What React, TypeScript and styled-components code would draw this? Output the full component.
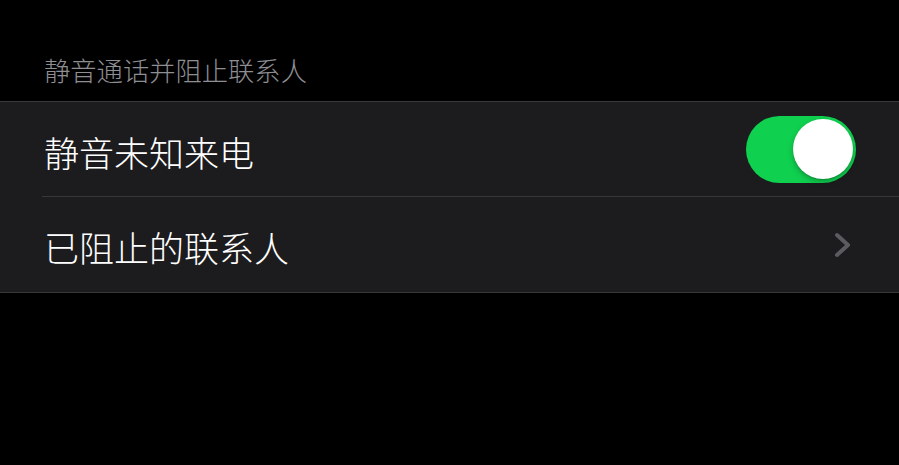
import { useState } from "react";
import styled, { createGlobalStyle } from "styled-components";

const GlobalStyle = createGlobalStyle`
  html, body {
    margin: 0;
    padding: 0;
    background: #000;
  }
  body {
    font-family: "Noto Sans CJK SC", "Noto Sans", sans-serif;
    -webkit-font-smoothing: antialiased;
  }
`;

const Page = styled.div`
  width: 899px;
  height: 465px;
  background: #000;
  overflow: hidden;
`;

const SectionHeader = styled.div`
  height: 101px;
  box-sizing: border-box;
  display: flex;
  align-items: flex-end;
  padding: 0 0 14px 44px;
  color: #8e8e93;
  font-size: 26.3px;
  font-weight: 300;
  line-height: 34px;
`;

const Group = styled.div`
  background: #1c1c1e;
  border-top: 1px solid #38383a;
  border-bottom: 1px solid #38383a;
`;

const Row = styled.div<{ $last?: boolean }>`
  position: relative;
  height: 95px;
  display: flex;
  align-items: center;
  justify-content: space-between;
  padding: 0 44px;
  box-sizing: border-box;

  &::after {
    content: "";
    display: ${(p) => (p.$last ? "none" : "block")};
    position: absolute;
    left: 42px;
    right: 0;
    bottom: 0;
    height: 1px;
    background: #38383a;
  }
`;

const Label = styled.span`
  color: #fff;
  font-size: 35px;
  font-weight: 300;
  line-height: 44px;
  margin-top: 4px;
`;

const SwitchTrack = styled.button<{ $on: boolean }>`
  position: relative;
  width: 110px;
  height: 67px;
  margin-right: -1px;
  border: none;
  border-radius: 34px;
  padding: 0;
  cursor: pointer;
  background: ${(p) => (p.$on ? "#0fd14f" : "#39393d")};
  transition: background 0.2s;
`;

const SwitchKnob = styled.span<{ $on: boolean }>`
  position: absolute;
  top: 3px;
  left: ${(p) => (p.$on ? "47px" : "4px")};
  width: 60px;
  height: 60px;
  border-radius: 50%;
  background: #fff;
  box-shadow: 0 3px 6px rgba(0, 0, 0, 0.25), 0 1px 1px rgba(0, 0, 0, 0.15);
  transition: left 0.2s;
`;

const Chevron = styled.svg`
  width: 18px;
  height: 26px;
  margin-right: 3px;
`;

export default function App() {
  const [silence, setSilence] = useState(true);

  return (
    <Page>
      <GlobalStyle />
      <SectionHeader>静音通话并阻止联系人</SectionHeader>
      <Group>
        <Row>
          <Label>静音未知来电</Label>
          <SwitchTrack $on={silence} onClick={() => setSilence(!silence)}>
            <SwitchKnob $on={silence} />
          </SwitchTrack>
        </Row>
        <Row $last>
          <Label>已阻止的联系人</Label>
          <Chevron viewBox="0 0 18 26">
            <path
              d="M3 3 L14 13 L3 23"
              fill="none"
              stroke="#5b5b60"
              strokeWidth="4"
              strokeLinecap="round"
              strokeLinejoin="round"
            />
          </Chevron>
        </Row>
      </Group>
    </Page>
  );
}
